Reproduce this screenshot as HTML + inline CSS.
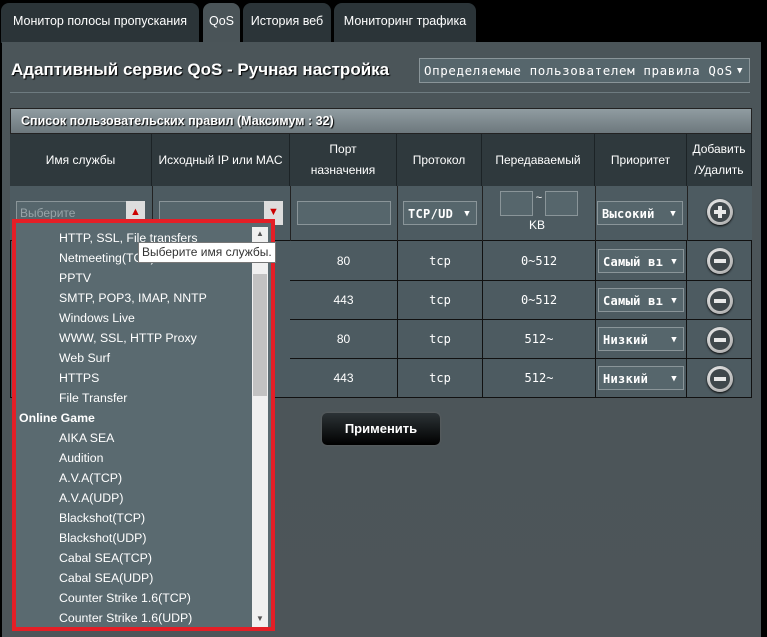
<!DOCTYPE html>
<html><head><meta charset="utf-8"><style>
*{margin:0;padding:0;box-sizing:border-box}
body{width:767px;height:637px;background:#000;position:relative;overflow:hidden;font-family:"Liberation Sans",Arial,sans-serif;color:#fff}
.a{position:absolute}
.tab{position:absolute;top:3px;height:40px;background:#2b3438;border-radius:8px 8px 0 0;font-size:12.5px;line-height:36px;text-align:center;color:#fff}
.panel{left:2px;top:42px;width:759px;height:595px;background:linear-gradient(#4b5559,#4d5559)}
.hd{background:#2f393d;border-right:1px solid #1c2326;font-size:12px;text-align:center;display:flex;align-items:center;justify-content:center;line-height:21px}
.cell{border-right:1px solid #111;border-bottom:1px solid #111;background:#4d5b61;font-size:12px;text-align:center;display:flex;align-items:center;justify-content:center;font-family:"DejaVu Sans Mono","Liberation Mono",monospace}
.sel{position:absolute;border:1px solid #8a9599;background:#56666c;font-family:"DejaVu Sans Mono","Liberation Mono",monospace;font-size:12px;padding-left:4px;line-height:24px;color:#fff;font-weight:bold;letter-spacing:0.3px}
.sel:after{content:"▼";position:absolute;right:6px;top:0;font-size:9px}
.btn{position:absolute;width:26px;height:26px;border-radius:50%;background:radial-gradient(circle at 40% 35%,#fafafa,#9a9a9a);box-shadow:0 1px 2px #000}
.btn i{position:absolute;left:3px;top:3px;width:20px;height:20px;border-radius:50%;background:#3f474b}
.btn b{position:absolute;left:7px;top:11px;width:12px;height:4px;background:#e8e8e8}
.li{position:absolute;left:59px;font-size:12.3px;line-height:20px;white-space:nowrap}
</style></head><body>
<div class="tab" style="left:1px;width:198px">Монитор полосы пропускания</div>
<div class="tab" style="left:203px;width:37px;background:#4a5458">QoS</div>
<div class="tab" style="left:243px;width:88px">История веб</div>
<div class="tab" style="left:334px;width:142px">Мониторинг трафика</div>
<div class="a panel"></div>
<div class="a" style="left:11px;top:60px;font-size:17px;font-weight:bold;text-shadow:1px 1px 1px #000">Адаптивный сервис QoS - Ручная настройка</div>
<div class="sel" style="left:419px;top:58px;width:331px;height:25px;font-size:12.5px;font-weight:normal;letter-spacing:0.6px">Определяемые пользователем правила QoS</div>
<div class="a" style="left:10px;top:92px;width:740px;height:1px;background:#6e7b80"></div>
<div class="a" style="left:10px;top:108px;width:742px;height:26px;background:linear-gradient(#909ca1,#6d787d);border:1px solid #222;font-size:12.5px;font-weight:bold;line-height:24px;padding-left:10px;text-shadow:1px 1px 1px #000">Список пользовательских правил (Максимум : 32)</div>
<div class="a hd" style="left:10px;top:134px;width:142px;height:52px">Имя службы</div>
<div class="a hd" style="left:152px;top:134px;width:138px;height:52px">Исходный IP или MAC</div>
<div class="a hd" style="left:290px;top:134px;width:107px;height:52px">Порт<br>назначения</div>
<div class="a hd" style="left:397px;top:134px;width:85px;height:52px">Протокол</div>
<div class="a hd" style="left:482px;top:134px;width:113px;height:52px">Передаваемый</div>
<div class="a hd" style="left:595px;top:134px;width:92px;height:52px">Приоритет</div>
<div class="a hd" style="left:687px;top:134px;width:65px;height:52px">Добавить<br>/Удалить</div>
<div class="a" style="left:10px;top:186px;width:742px;height:55px;background:#4d5b61;border-bottom:1px solid #111"></div>
<div class="a" style="left:152px;top:186px;width:1px;height:55px;background:#222"></div>
<div class="a" style="left:290px;top:186px;width:1px;height:55px;background:#222"></div>
<div class="a" style="left:397px;top:186px;width:1px;height:55px;background:#222"></div>
<div class="a" style="left:482px;top:186px;width:1px;height:55px;background:#222"></div>
<div class="a" style="left:595px;top:186px;width:1px;height:55px;background:#222"></div>
<div class="a" style="left:687px;top:186px;width:1px;height:55px;background:#222"></div>
<div class="a" style="left:16px;top:201px;width:128px;height:24px;background:#56666c;border:1px solid #8a9599;color:#98a4a8;font-size:12px;line-height:22px;padding-left:3px">Выберите</div>
<div class="a" style="left:126px;top:201px;width:19px;height:24px;background:#ddd;color:#c00;font-size:11px;text-align:center;line-height:22px">▲</div>
<div class="a" style="left:159px;top:201px;width:124px;height:24px;background:#56666c;border:1px solid #8a9599"></div>
<div class="a" style="left:264px;top:201px;width:19px;height:24px;background:#ddd;color:#c00;font-size:11px;text-align:center;line-height:22px">▼</div>
<div class="a" style="left:297px;top:201px;width:94px;height:24px;background:#56666c;border:1px solid #8a9599"></div>
<div class="sel" style="left:403px;top:201px;width:74px;height:24px">TCP/UD</div>
<div class="a" style="left:500px;top:191px;width:33px;height:25px;background:#56666c;border:1px solid #8a9599"></div>
<div class="a" style="left:545px;top:191px;width:33px;height:25px;background:#56666c;border:1px solid #8a9599"></div>
<div class="a" style="left:533px;top:192px;width:12px;text-align:center;font-size:11px">~</div>
<div class="a" style="left:529px;top:218px;font-size:12px">KB</div>
<div class="sel" style="left:597px;top:201px;width:86px;height:24px">Высокий</div>
<div class="btn" style="left:707px;top:199px"><i></i><b></b><b style="left:11px;top:7px;width:4px;height:12px"></b></div>
<div class="a cell" style="left:290px;top:241px;width:108px;height:40px;font-family:'Liberation Sans',sans-serif">80</div>
<div class="a cell" style="left:398px;top:241px;width:85px;height:40px">tcp</div>
<div class="a cell" style="left:483px;top:241px;width:113px;height:40px">0~512</div>
<div class="a cell" style="left:596px;top:241px;width:91px;height:40px"></div>
<div class="a cell" style="left:687px;top:241px;width:65px;height:40px"></div>
<div class="a cell" style="left:290px;top:281px;width:108px;height:39px;font-family:'Liberation Sans',sans-serif">443</div>
<div class="a cell" style="left:398px;top:281px;width:85px;height:39px">tcp</div>
<div class="a cell" style="left:483px;top:281px;width:113px;height:39px">0~512</div>
<div class="a cell" style="left:596px;top:281px;width:91px;height:39px"></div>
<div class="a cell" style="left:687px;top:281px;width:65px;height:39px"></div>
<div class="a cell" style="left:290px;top:320px;width:108px;height:39px;font-family:'Liberation Sans',sans-serif">80</div>
<div class="a cell" style="left:398px;top:320px;width:85px;height:39px">tcp</div>
<div class="a cell" style="left:483px;top:320px;width:113px;height:39px">512~</div>
<div class="a cell" style="left:596px;top:320px;width:91px;height:39px"></div>
<div class="a cell" style="left:687px;top:320px;width:65px;height:39px"></div>
<div class="a cell" style="left:290px;top:359px;width:108px;height:39px;font-family:'Liberation Sans',sans-serif">443</div>
<div class="a cell" style="left:398px;top:359px;width:85px;height:39px">tcp</div>
<div class="a cell" style="left:483px;top:359px;width:113px;height:39px">512~</div>
<div class="a cell" style="left:596px;top:359px;width:91px;height:39px"></div>
<div class="a cell" style="left:687px;top:359px;width:65px;height:39px"></div>
<div class="a" style="left:10px;top:241px;width:280px;height:157px;background:#4d5b61;border-left:1px solid #111;border-bottom:1px solid #111"></div>
<div class="sel" style="left:598px;top:249px;width:86px;height:24px">Самый вı</div>
<div class="sel" style="left:598px;top:288px;width:86px;height:24px">Самый вı</div>
<div class="sel" style="left:598px;top:327px;width:86px;height:24px">Низкий</div>
<div class="sel" style="left:598px;top:366px;width:86px;height:24px">Низкий</div>
<div class="btn" style="left:707px;top:248px"><i></i><b></b></div>
<div class="btn" style="left:707px;top:288px"><i></i><b></b></div>
<div class="btn" style="left:707px;top:327px"><i></i><b></b></div>
<div class="btn" style="left:707px;top:366px"><i></i><b></b></div>
<div class="a" style="left:322px;top:413px;width:118px;height:32px;border-radius:5px;background:linear-gradient(#2c3336,#000);box-shadow:0 0 2px #666;font-size:13px;font-weight:bold;text-align:center;line-height:32px">Применить</div>
<div class="a" style="left:12px;top:219px;width:263px;height:412px;border:4px solid #e41e26;background:#5a6a70"></div>
<div class="a" style="left:252px;top:227px;width:16px;height:400px;background:#f0f0f0"></div>
<div class="a" style="left:253px;top:274px;width:14px;height:122px;background:#c2c2c2"></div>
<div class="a" style="left:253px;top:229px;width:14px;font-size:8px;color:#555;text-align:center">▲</div>
<div class="a" style="left:253px;top:614px;width:14px;font-size:8px;color:#555;text-align:center">▼</div>
<div class="li" style="top:228px">HTTP, SSL, File transfers</div>
<div class="li" style="top:248px">Netmeeting(TCP)</div>
<div class="li" style="top:268px">PPTV</div>
<div class="li" style="top:288px">SMTP, POP3, IMAP, NNTP</div>
<div class="li" style="top:308px">Windows Live</div>
<div class="li" style="top:328px">WWW, SSL, HTTP Proxy</div>
<div class="li" style="top:348px">Web Surf</div>
<div class="li" style="top:368px">HTTPS</div>
<div class="li" style="top:388px">File Transfer</div>
<div class="li" style="top:408px;left:19px;font-weight:bold">Online Game</div>
<div class="li" style="top:428px">AIKA SEA</div>
<div class="li" style="top:448px">Audition</div>
<div class="li" style="top:468px">A.V.A(TCP)</div>
<div class="li" style="top:488px">A.V.A(UDP)</div>
<div class="li" style="top:508px">Blackshot(TCP)</div>
<div class="li" style="top:528px">Blackshot(UDP)</div>
<div class="li" style="top:548px">Cabal SEA(TCP)</div>
<div class="li" style="top:568px">Cabal SEA(UDP)</div>
<div class="li" style="top:588px">Counter Strike 1.6(TCP)</div>
<div class="li" style="top:608px">Counter Strike 1.6(UDP)</div>
<div class="a" style="left:138px;top:242px;width:138px;height:21px;background:#fff;border:1px solid #777;color:#333;font-size:12px;line-height:19px;padding-left:3px;white-space:nowrap;overflow:hidden">Выберите имя службы.</div>
</body></html>
